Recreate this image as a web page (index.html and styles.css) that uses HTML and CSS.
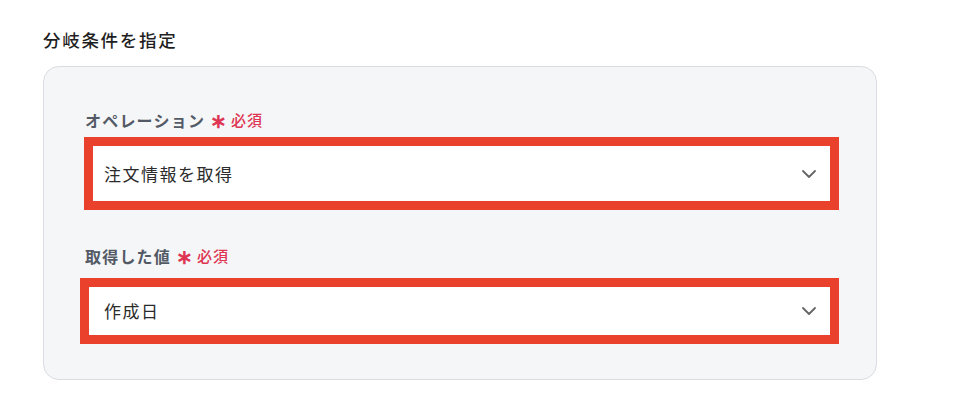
FILE: index.html
```html
<!DOCTYPE html>
<html lang="ja">
<head>
<meta charset="utf-8">
<link rel="stylesheet" href="styles.css">
</head>
<body>
<div class="page">
  <h2 class="title">分岐条件を指定</h2>
  <div class="panel">
    <div class="label label-first">オペレーション<span class="req"><span class="ast">∗</span>必須</span></div>
    <div class="select select-first">
      <span class="value">注文情報を取得</span>
      <svg class="chev" width="14" height="8" viewBox="0 0 14 8"><path d="M1 1 L7 7 L13 1" fill="none" stroke="#666" stroke-width="1.8" stroke-linecap="round" stroke-linejoin="round"/></svg>
    </div>
    <div class="label label-second">取得した値<span class="req"><span class="ast">∗</span>必須</span></div>
    <div class="select select-second">
      <span class="value">作成日</span>
      <svg class="chev" width="14" height="8" viewBox="0 0 14 8"><path d="M1 1 L7 7 L13 1" fill="none" stroke="#666" stroke-width="1.8" stroke-linecap="round" stroke-linejoin="round"/></svg>
    </div>
  </div>
</div>
</body>
</html>
```
FILE: styles.css
```css
html, body {
  margin: 0;
  padding: 0;
  background: #ffffff;
}
body {
  font-family: "Noto Sans CJK JP", "Noto Sans", sans-serif;
  color: #222;
}
.page {
  padding: 28px 0 0 43px;
  width: 834px;
}
.title {
  margin: 0 0 14px 0;
  font-size: 17.5px;
  line-height: 24px;
  font-weight: 500;
  letter-spacing: 1.7px;
  color: #1f1f1f;
}
.panel {
  box-sizing: border-box;
  width: 834px;
  height: 314px;
  border: 1px solid #d9dce1;
  border-radius: 16px;
  background: #f5f6f8;
  padding: 41px 37px 0 41px;
  display: flex;
  flex-direction: column;
}
.label {
  display: flex;
  align-items: center;
  font-size: 16px;
  line-height: 24px;
  font-weight: 600;
  color: #535a66;
  letter-spacing: 1.2px;
}
.label-second {
  margin-top: 34px;
}
.req {
  display: inline-flex;
  align-items: center;
  margin-left: 5px;
  font-size: 15px;
  font-weight: 500;
  color: #dd3552;
  letter-spacing: 1px;
}
.ast {
  font-size: 20px;
  font-weight: 700;
  margin-right: 3px;
  line-height: 20px;
}
.select {
  box-sizing: border-box;
  border: 9px solid #e9412b;
  background: #ffffff;
  display: flex;
  align-items: center;
  justify-content: space-between;
  padding-right: 14px;
}
.select-first {
  margin: 5px 0 0 -1px;
  height: 73px;
  width: 755px;
  padding-left: 11px;
}
.select-second {
  margin: 10px 0 0 -5px;
  height: 66px;
  width: 759px;
  padding-left: 15px;
}
.value {
  font-size: 17px;
  line-height: 24px;
  color: #2b2b2b;
  letter-spacing: 1.5px;
}
.chev {
  display: block;
}
```
